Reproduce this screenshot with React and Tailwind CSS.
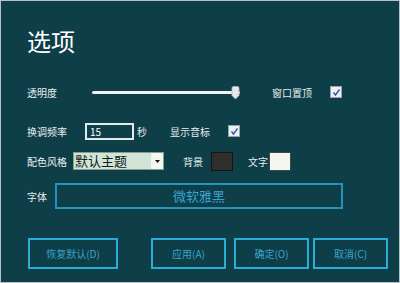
import React from 'react';

const Check = () => (
  <div className="w-[12px] h-[12px] bg-[#eef0f0] border border-[#9aa4a8] flex items-center justify-center">
    <svg width="9" height="9" viewBox="0 0 9 9">
      <path d="M1.5 4.5 L3.5 7 L7.5 1.5" fill="none" stroke="#3552b8" strokeWidth="1.4" />
    </svg>
  </div>
);

const Btn = ({ children, className = '' }) => (
  <div className={`h-[31px] border-2 border-[#2aaed6] flex items-center justify-center text-[10px] text-[#3aa3c9] ${className}`}>
    {children}
  </div>
);

export default function App() {
  const font = { fontFamily: '"Noto Sans CJK SC", "Noto Sans", sans-serif' };
  return (
    <div style={font} className="w-[400px] h-[283px] bg-[#0e3f49] border border-[#b8c2c4] flex flex-col pl-[26px] pt-[28px] text-[#e8eeee] text-[10px] overflow-hidden">
      <div className="h-[24px] leading-[24px] text-[24px] text-white">选项</div>

      {/* 透明度 */}
      <div className="mt-[31px] h-[16px] flex items-center">
        <span className="w-[65px]">透明度</span>
        <div className="w-[148px] h-[16px] flex items-center relative">
          <div className="w-full h-[3px] bg-[#f2f4f4] rounded-sm" />
          <svg className="absolute left-[139px] top-[2px]" width="9" height="14" viewBox="0 0 9 14">
            <path d="M1 2 Q1 0.5 2.5 0.5 H6.5 Q8 0.5 8 2 V9.5 L4.5 13 L1 9.5 Z" fill="#e6e9ea" stroke="#b0b6b8" strokeWidth="0.8" />
          </svg>
        </div>
        <span className="ml-[32px]">窗口置顶</span>
        <div className="ml-[18px]"><Check /></div>
      </div>

      {/* 换调频率 */}
      <div className="mt-[22px] h-[18px] flex items-center">
        <span className="w-[58px]">换调频率</span>
        <div className="w-[49px] h-[17px] border-2 border-[#e4ebe6] flex items-center pl-[3px] text-white text-[10px]">15</div>
        <span className="ml-[3px]">秒</span>
        <span className="ml-[23px]">显示音标</span>
        <div className="ml-[18px]"><Check /></div>
      </div>

      {/* 配色风格 */}
      <div className="mt-[11px] h-[20px] flex items-center">
        <span className="w-[46px]">配色风格</span>
        <div className="w-[91px] h-[18px] bg-[#d3e4d6] border border-[#7f9f90] flex items-stretch">
          <span className="flex-1 text-[13px] leading-[16px] text-[#0d2020] pl-[1px]">默认主题</span>
          <div className="w-[12px] bg-[#f4f6f4] flex items-center justify-center">
            <svg width="5" height="3" viewBox="0 0 5 3"><path d="M0 0 H5 L2.5 3 Z" fill="#111" /></svg>
          </div>
        </div>
        <span className="ml-[19px]">背景</span>
        <div className="ml-[8px] w-[22px] h-[19px] bg-[#2f2e2a] border border-[#151512]" />
        <span className="ml-[15px]">文字</span>
        <div className="ml-[1px] w-[22px] h-[19px] bg-[#f6f6f0] border border-[#3b4a48]" />
      </div>

      {/* 字体 */}
      <div className="mt-[12px] h-[26px] flex items-center">
        <span className="w-[28px]">字体</span>
        <div className="w-[288px] h-[26px] border-2 border-[#2592bb] flex items-center justify-center text-[13px] text-[#3aa2cf]">
          微软雅黑
        </div>
      </div>

      {/* buttons */}
      <div className="mt-[29px] flex items-center pl-[1px]">
        <Btn className="w-[90px]">恢复默认(D)</Btn>
        <Btn className="w-[75px] ml-[33px]">应用(A)</Btn>
        <Btn className="w-[75px] ml-[8px]">确定(O)</Btn>
        <Btn className="w-[75px] ml-[4px]">取消(C)</Btn>
      </div>
    </div>
  );
}
